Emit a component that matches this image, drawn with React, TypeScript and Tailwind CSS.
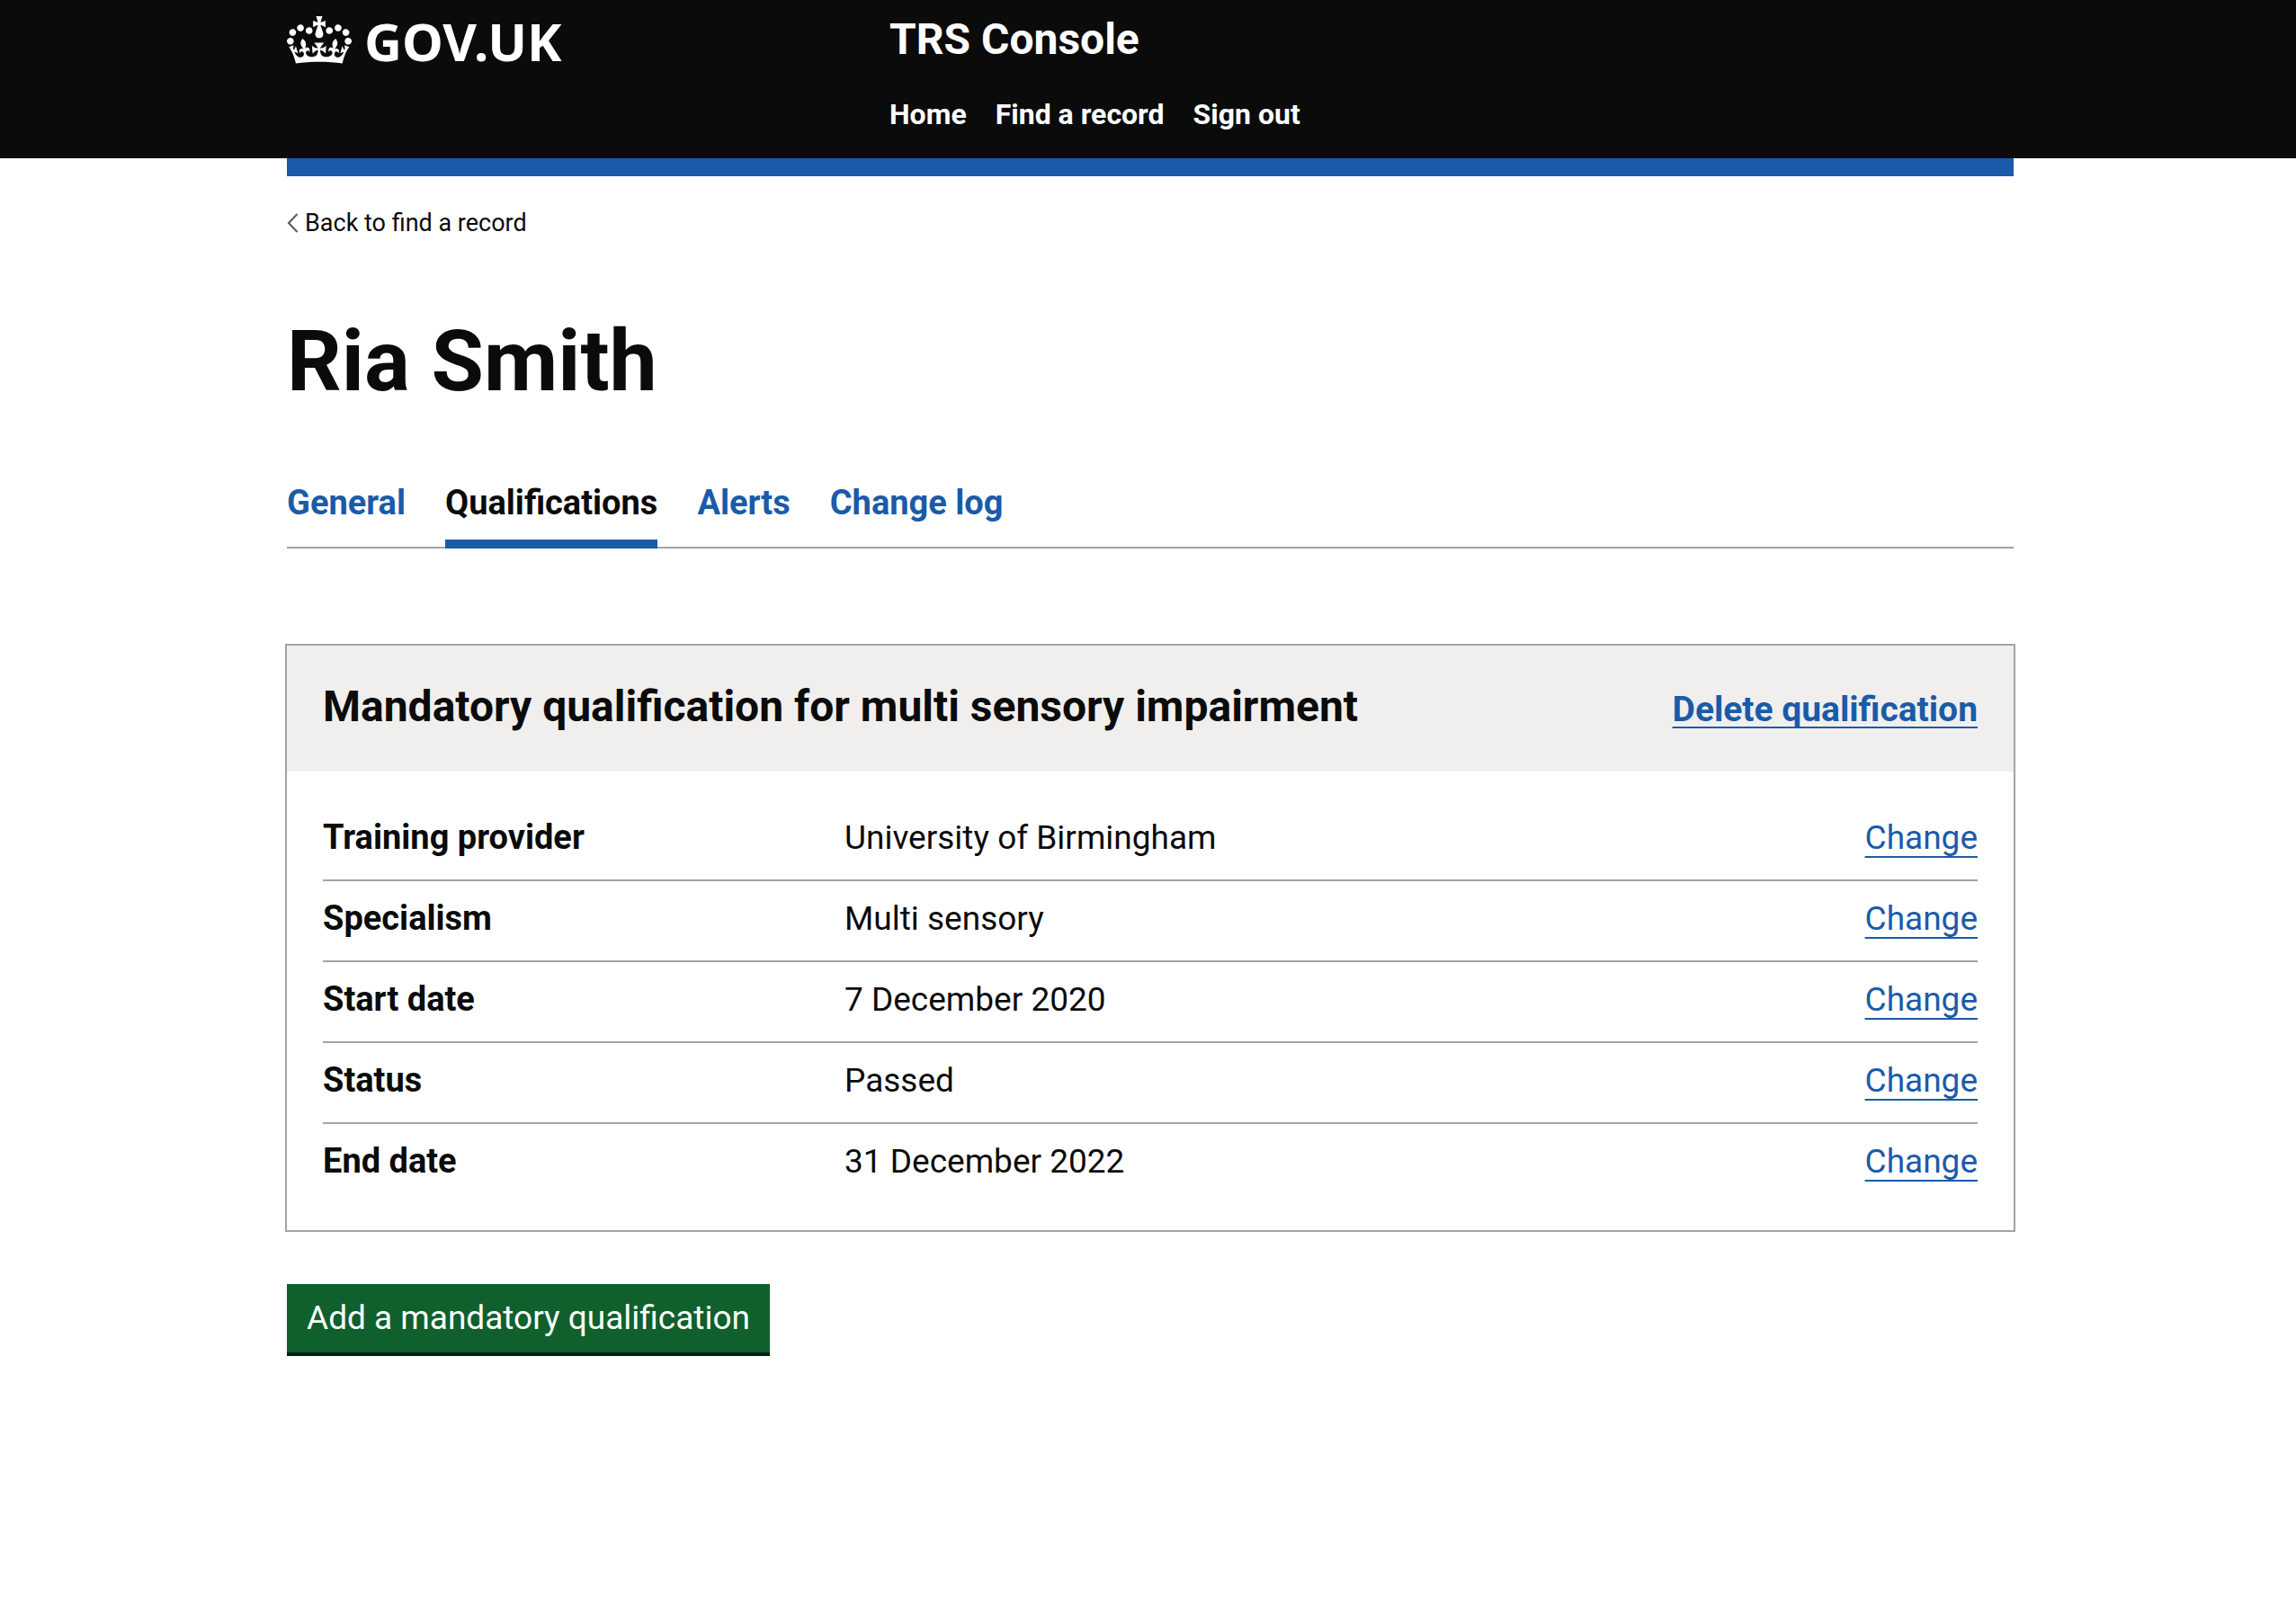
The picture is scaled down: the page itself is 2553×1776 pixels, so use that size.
import type { ReactNode } from "react";

const navigation = ["Home", "Find a record", "Sign out"];

const tabs = [
  { label: "General", current: false },
  { label: "Qualifications", current: true },
  { label: "Alerts", current: false },
  { label: "Change log", current: false },
];

const details = [
  { label: "Training provider", value: "University of Birmingham" },
  { label: "Specialism", value: "Multi sensory" },
  { label: "Start date", value: "7 December 2020" },
  { label: "Status", value: "Passed" },
  { label: "End date", value: "31 December 2022" },
];

function Container({ children }: { children: ReactNode }) {
  return (
    <div className="pl-[5px]">
      <div className="mx-auto max-w-[1920px]">{children}</div>
    </div>
  );
}

function Crown() {
  return (
    <svg
      aria-hidden="true"
      viewBox="0 0 132 97"
      className="mt-1 h-[53px] w-[72px] shrink-0 fill-current"
    >
      <path
        fillRule="evenodd"
        d="M25 30.2c3.5 1.5 7.7-.2 9.1-3.7 1.5-3.6-.2-7.8-3.9-9.2-3.6-1.4-7.6.3-9.1 3.9-1.4 3.5.3 7.5 3.9 9zM9 39.5c3.6 1.5 7.8-.2 9.2-3.7 1.5-3.6-.2-7.8-3.9-9.1-3.6-1.5-7.6.2-9.1 3.8-1.4 3.5.3 7.5 3.8 9zM4.4 57.2c3.5 1.5 7.7-.2 9.1-3.8 1.5-3.6-.2-7.7-3.9-9.1-3.5-1.5-7.6.3-9.1 3.8-1.4 3.5.3 7.6 3.9 9.1zm38.3-21.4c3.5 1.5 7.7-.2 9.1-3.8 1.5-3.6-.2-7.7-3.9-9.1-3.6-1.5-7.6.3-9.1 3.8-1.3 3.6.4 7.7 3.9 9.1zm64.4-5.6c-3.6 1.5-7.8-.2-9.1-3.7-1.5-3.6.2-7.8 3.8-9.2 3.6-1.4 7.7.3 9.2 3.9 1.3 3.5-.4 7.5-3.9 9zm15.9 9.3c-3.6 1.5-7.7-.2-9.1-3.7-1.5-3.6.2-7.8 3.7-9.1 3.6-1.5 7.7.2 9.2 3.8 1.5 3.5-.3 7.5-3.8 9zm4.7 17.7c-3.6 1.5-7.8-.2-9.2-3.8-1.5-3.6.2-7.7 3.9-9.1 3.6-1.5 7.7.3 9.2 3.8 1.3 3.5-.4 7.6-3.9 9.1zM89.3 35.8c-3.6 1.5-7.8-.2-9.2-3.8-1.4-3.6.2-7.7 3.9-9.1 3.6-1.5 7.7.3 9.2 3.8 1.4 3.6-.3 7.7-3.9 9.1zM69.7 17.7l8.9 4.7V9.3l-8.9 2.8c-.2-.3-.5-.6-.9-.9L72.4 0H59.6l3.5 11.2c-.3.3-.6.5-.9.9l-8.8-2.8v13.1l8.8-4.7c.3.3.6.7.9.9l-5 15.4v.1c-.2.8-.4 1.6-.4 2.4 0 4.1 3.1 7.5 7 8.1h.2c.3 0 .7.1 1 .1.4 0 .7 0 1-.1h.2c4-.6 7.1-4.1 7.1-8.1 0-.8-.1-1.7-.4-2.4V34l-5.1-15.4c.4-.2.7-.6 1-.9zM66 92.8c16.9 0 32.8 1.1 47.1 3.2 4-16.9 8.9-26.7 14-33.5l-9.6-3.4c1 4.9 1.1 7.2 0 10.2-1.5-1.4-3-4.3-4.2-8.7L108.6 76c2.8-2 5-3.2 7.5-3.3-4.4 9.4-10 11.9-13.6 11.2-4.3-.8-6.3-4.6-5.6-7.9 1-4.7 5.7-5.9 8-.5 4.3-8.7-3-11.4-7.6-8.8 7.1-7.2 7.9-13.5 2.1-21.1-8 6.1-8.1 12.3-4.5 20.8-4.7-5.4-12.1-2.5-9.5 6.2 3.4-5.2 7.9-2 7.2 3.1-.6 4.3-6.4 7.8-13.5 7.2-10.3-.9-10.9-8-11.2-13.8 2.5-.5 7.1 1.8 11 7.3L80.2 60c-4.1 4.4-8 5.3-12.3 5.4 1.4-4.4 8-11.6 8-11.6H55.5s6.4 7.2 7.9 11.6c-4.2-.1-8-1-12.3-5.4l1.4 16.4c3.9-5.5 8.5-7.7 10.9-7.3-.3 5.8-.9 12.8-11.1 13.8-7.2.6-12.9-2.9-13.5-7.2-.7-5 3.8-8.3 7.1-3.1 2.7-8.7-4.6-11.6-9.4-6.2 3.7-8.5 3.6-14.7-4.6-20.8-5.8 7.6-5 13.9 2.2 21.1-4.7-2.6-11.9.1-7.7 8.8 2.3-5.5 7.1-4.2 8.1.5.7 3.3-1.3 7.1-5.7 7.9-3.5.7-9-1.8-13.5-11.2 2.5.1 4.7 1.3 7.5 3.3l-4.7-15.4c-1.2 4.4-2.7 7.2-4.3 8.7-1.1-3-.9-5.3 0-10.2l-9.5 3.4c5 6.9 9.9 16.7 14 33.5 14.8-2.1 30.8-3.2 47.7-3.2z"
      />
    </svg>
  );
}

function Header() {
  return (
    <header>
      <div className="bg-[#0b0b0b] text-white">
        <Container>
          <div className="flex items-start pt-[14px] pb-[29px] font-bold">
            <div className="w-[670px] shrink-0">
              <a href="#home" className="inline-flex items-start gap-[14px]">
                <Crown />
                <span className="font-['Noto_Sans',sans-serif] text-[58px] leading-[64px]">
                  GOV.UK
                </span>
              </a>
            </div>
            <div>
              <a href="#console" className="block text-5xl leading-[60px]">
                TRS Console
              </a>
              <nav aria-label="Menu" className="mt-[33px]">
                <ul className="flex gap-8 text-[32px] leading-10">
                  {navigation.map((item) => (
                    <li key={item}>
                      <a href="#menu">{item}</a>
                    </li>
                  ))}
                </ul>
              </nav>
            </div>
          </div>
        </Container>
      </div>
      <Container>
        <div className="h-5 bg-[#1a5ba9]" />
      </Container>
    </header>
  );
}

function Tabs() {
  return (
    <nav
      aria-label="Record sections"
      className="mt-[82px] shadow-[inset_0_-2px_#9fa4a7]"
    >
      <ul className="flex gap-[44px] text-[38px] leading-[50px] font-bold">
        {tabs.map((tab) => (
          <li key={tab.label}>
            <a
              href="#section"
              aria-current={tab.current ? "page" : undefined}
              className={
                tab.current
                  ? "block border-b-10 border-[#1a5ba9] pb-4"
                  : "block pb-[26px] text-[#1a5ba9]"
              }
            >
              {tab.label}
            </a>
          </li>
        ))}
      </ul>
    </nav>
  );
}

function SummaryCard() {
  return (
    <section className="-mx-0.5 mt-[106px] border-2 border-[#9fa4a7]">
      <div className="flex items-baseline justify-between bg-[#f0efed] px-10 pt-[38px] pb-[42px] font-bold">
        <h2 className="text-5xl leading-[60px]">
          Mandatory qualification for multi sensory impairment
        </h2>
        <a
          href="#delete"
          className="text-[39px] leading-[50px] text-[#1a5ba9] underline decoration-2 underline-offset-[6px] [text-decoration-skip-ink:none]"
        >
          Delete qualification
        </a>
      </div>
      <div className="px-10 pt-8 pb-[30px]">
        <table className="w-full border-separate border-spacing-0 text-left text-[37px] leading-[50px]">
          <tbody>
            {details.map((row) => (
              <tr
                key={row.label}
                className="align-baseline [&>*]:border-b-2 [&>*]:border-[#9fa4a7] [&>*]:pt-4 [&>*]:pb-[21px] last:[&>*]:border-b-0"
              >
                <th scope="row" className="w-[580px] text-[38px] font-bold">
                  {row.label}
                </th>
                <td>{row.value}</td>
                <td className="text-right">
                  <a
                    href="#change"
                    aria-label={`Change ${row.label.toLowerCase()}`}
                    className="text-[#1a5ba9] underline decoration-2 underline-offset-8 [text-decoration-skip-ink:none]"
                  >
                    Change
                  </a>
                </td>
              </tr>
            ))}
          </tbody>
        </table>
      </div>
    </section>
  );
}

export default function App() {
  return (
    <div className="min-h-screen bg-white font-['Roboto',sans-serif] text-[#0b0b0b]">
      <Header />
      <Container>
        <a
          href="#find"
          className="mt-8 inline-flex items-center gap-2 text-[27px] leading-10"
        >
          <svg
            aria-hidden="true"
            viewBox="0 0 12 22"
            className="h-[22px] w-3 fill-none stroke-[#505a5f] stroke-2"
          >
            <path d="M11.5 1 2 11l9.500 10" />
          </svg>
          Back to find a record
        </a>
        <main>
          <h1 className="mt-[84px] text-[95px] leading-[100px] font-bold">
            Ria Smith
          </h1>
          <Tabs />
          <SummaryCard />
          <button
            type="button"
            className="mt-[58px] block bg-[#0f602d] px-[22px] py-[13px] text-[37px] leading-[50px] text-white shadow-[0_4px_0_#02230f]"
          >
            Add a mandatory qualification
          </button>
        </main>
      </Container>
    </div>
  );
}
